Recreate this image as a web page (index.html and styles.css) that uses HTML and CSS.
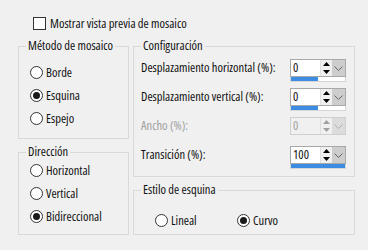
FILE: index.html
```html
<!DOCTYPE html>
<html lang="es">
<head>
    <meta charset="UTF-8">
    <title>Mosaico</title>
    <link rel="stylesheet" href="styles.css">
</head>
<body>
    <div class="dialog">
        <div class="check"><span class="box"></span>Mostrar vista previa de mosaico</div>

        <div class="cols">
            <div class="col">
                <fieldset class="group metodo">
                    <legend>Método de mosaico</legend>
                    <div class="inner">
                        <div class="radio"><span class="dot"></span>Borde</div>
                        <div class="radio on"><span class="dot"></span>Esquina</div>
                        <div class="radio"><span class="dot"></span>Espejo</div>
                    </div>
                </fieldset>
                <fieldset class="group direccion">
                    <legend>Dirección</legend>
                    <div class="inner">
                        <div class="radio"><span class="dot"></span>Horizontal</div>
                        <div class="radio"><span class="dot"></span>Vertical</div>
                        <div class="radio on"><span class="dot"></span>Bidireccional</div>
                    </div>
                </fieldset>
            </div>

            <div class="col">
                <fieldset class="group config">
                    <legend>Configuración</legend>
                    <div class="inner">
                        <div class="field">
                            <span>Desplazamiento horizontal (%):</span>
                            <div class="spin">
                                <div class="spin-top">
                                    <span class="spin-val">0</span>
                                    <span class="spin-btns">
                                        <svg width="7" height="4" viewBox="0 0 7 4"><path d="M0 4 L3.5 0 L7 4 Z"/></svg>
                                        <svg width="7" height="4" viewBox="0 0 7 4"><path d="M0 0 L7 0 L3.5 4 Z"/></svg>
                                    </span>
                                    <span class="spin-drop"><svg width="9" height="5" viewBox="0 0 9 5"><path d="M0.5 0.5 L4.5 4.5 L8.5 0.5"/></svg></span>
                                </div>
                                <div class="spin-track"><div class="spin-fill" style="width: 50%"></div></div>
                            </div>
                        </div>
                        <div class="field">
                            <span>Desplazamiento vertical (%):</span>
                            <div class="spin">
                                <div class="spin-top">
                                    <span class="spin-val">0</span>
                                    <span class="spin-btns">
                                        <svg width="7" height="4" viewBox="0 0 7 4"><path d="M0 4 L3.5 0 L7 4 Z"/></svg>
                                        <svg width="7" height="4" viewBox="0 0 7 4"><path d="M0 0 L7 0 L3.5 4 Z"/></svg>
                                    </span>
                                    <span class="spin-drop"><svg width="9" height="5" viewBox="0 0 9 5"><path d="M0.5 0.5 L4.5 4.5 L8.5 0.5"/></svg></span>
                                </div>
                                <div class="spin-track"><div class="spin-fill" style="width: 50%"></div></div>
                            </div>
                        </div>
                        <div class="field disabled">
                            <span>Ancho (%):</span>
                            <div class="spin">
                                <div class="spin-top">
                                    <span class="spin-val">0</span>
                                    <span class="spin-btns">
                                        <svg width="7" height="4" viewBox="0 0 7 4"><path d="M0 4 L3.5 0 L7 4 Z"/></svg>
                                        <svg width="7" height="4" viewBox="0 0 7 4"><path d="M0 0 L7 0 L3.5 4 Z"/></svg>
                                    </span>
                                    <span class="spin-drop"><svg width="9" height="5" viewBox="0 0 9 5"><path d="M0.5 0.5 L4.5 4.5 L8.5 0.5"/></svg></span>
                                </div>
                            </div>
                        </div>
                        <div class="field">
                            <span>Transición (%):</span>
                            <div class="spin">
                                <div class="spin-top">
                                    <span class="spin-val">100</span>
                                    <span class="spin-btns">
                                        <svg width="7" height="4" viewBox="0 0 7 4"><path d="M0 4 L3.5 0 L7 4 Z"/></svg>
                                        <svg width="7" height="4" viewBox="0 0 7 4"><path d="M0 0 L7 0 L3.5 4 Z"/></svg>
                                    </span>
                                    <span class="spin-drop"><svg width="9" height="5" viewBox="0 0 9 5"><path d="M0.5 0.5 L4.5 4.5 L8.5 0.5"/></svg></span>
                                </div>
                                <div class="spin-track"><div class="spin-fill" style="width: 100%"></div></div>
                            </div>
                        </div>
                    </div>
                </fieldset>

                <fieldset class="group estilo">
                    <legend>Estilo de esquina</legend>
                    <div class="inner">
                        <div class="radio"><span class="dot"></span>Lineal</div>
                        <div class="radio on"><span class="dot"></span>Curvo</div>
                    </div>
                </fieldset>
            </div>
        </div>
    </div>
</body>
</html>
```

FILE: styles.css
```css
body { margin: 0; background: #f0f0f0; color: #111; font-family: "Open Sans", "Liberation Sans", sans-serif; font-stretch: 80%; font-size: 12.5px; }
.dialog { padding: 16px 0 0 18px; }

.check { display: flex; align-items: center; height: 14px; margin-left: 15px; }
.check .box { width: 11px; height: 11px; border: 1px solid #333; background: #fff; margin-right: 4px; }

.cols { display: grid; grid-template-columns: 111px 222px; column-gap: 4px; margin-top: 9px; }
.col { display: flex; flex-direction: column; gap: 6px; }

.group { margin: 0; padding: 0; min-width: 0; border: 1px solid #d9d9d9; box-sizing: border-box; }
.group legend { margin-left: 7px; padding: 0 2px; line-height: 14px; }

.metodo { height: 100px; }
.metodo .inner { padding: 8px 0 0 11px; }
.direccion { height: 90px; }
.direccion .inner { padding: 0 0 0 11px; }
.config { height: 138px; }
.config .inner { padding: 6px 8px 0 7px; }
.estilo { height: 52px; }
.estilo .inner { padding: 12px 0 0 21px; display: flex; }

.radio { display: flex; align-items: center; height: 23px; }
.radio .dot { width: 11px; height: 11px; border: 1px solid #333; border-radius: 50%; background: #fff; margin-right: 3px; display: flex; align-items: center; justify-content: center; }
.radio.on .dot::after { content: ""; width: 7px; height: 7px; border-radius: 50%; background: #1a1a1a; }
.estilo .radio { width: 82px; }

.field { display: flex; justify-content: space-between; height: 24px; margin-bottom: 5px; }
.field > span { line-height: 18px; }
.field.disabled > span { color: #a0a0a0; }

.spin { width: 56px; }
.spin-top { display: flex; height: 18px; border: 1px solid #a8a8a8; background: #fff; box-sizing: border-box; }
.spin-val { flex: 1; padding-left: 2px; line-height: 16px; }
.spin-btns { width: 11px; display: flex; flex-direction: column; align-items: center; justify-content: space-around; background: #f0f0f0; border-left: 1px solid #e0e0e0; }
.spin-btns svg { fill: #000; }
.spin-drop { width: 13px; display: flex; align-items: center; justify-content: center; background: #cdcdcd; }
.spin-drop svg { fill: none; stroke: #666; stroke-width: 1; }
.spin-track { height: 5px; border: 1px solid #d6d6d6; border-top: 0; background: #fff; box-sizing: border-box; }
.spin-fill { height: 100%; background: #3c8de2; }

.disabled .spin-top { border-color: #cfcfcf; background: #f0f0f0; }
.disabled .spin-val { color: #a0a0a0; }
.disabled .spin-btns svg { fill: #a0a0a0; }
.disabled .spin-drop { background: #dcdcdc; }
.disabled .spin-drop svg { stroke: #b0b0b0; }
```
